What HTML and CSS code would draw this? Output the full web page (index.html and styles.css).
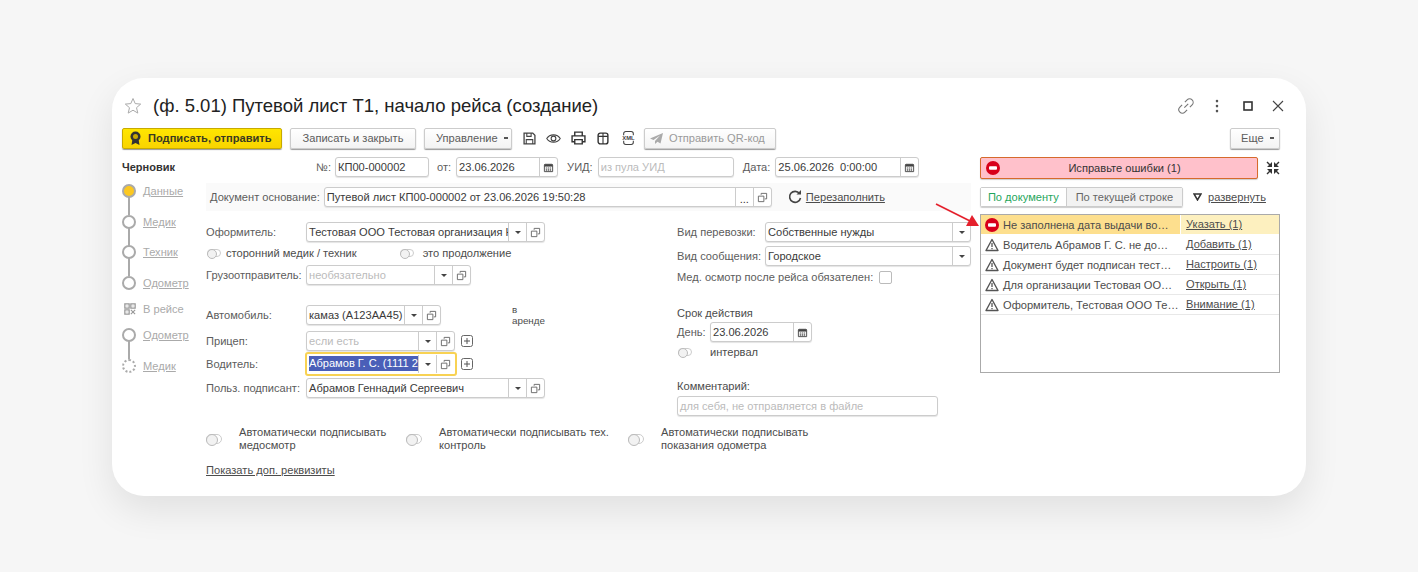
FILE: index.html
```html
<!DOCTYPE html>
<html lang="ru">
<head>
    <meta charset="UTF-8">
    <title>Путевой лист Т1</title>
    <link rel="stylesheet" href="styles.css">
</head>
<body>
    <svg class="defs" width="0" height="0">
        <symbol id="ico-copy" viewBox="0 0 12 12"><path d="M4.5 3V1.500h6v6H8.500M1.500 4.500h6v6h-6z" fill="none" stroke="#666"/></symbol>
        <symbol id="ico-cal" viewBox="0 0 12 12"><path d="M1.500 3.500a1 1 0 0 1 1-1h7a1 1 0 0 1 1 1v7h-9z" fill="#fff" stroke="#444"/><path d="M1.500 2.500h9v2.500h-9z" fill="#444"/><path d="M3 6.500h6M3 8h6M3 9.500h6" stroke="#555" stroke-dasharray="1.500 .7"/></symbol>
        <symbol id="ico-err" viewBox="0 0 14 14"><circle cx="7" cy="7" r="7" fill="#d8001a"/><rect x="3" y="5.300" width="8" height="3.400" rx="1" fill="#fff"/></symbol>
        <symbol id="ico-warn" viewBox="0 0 14 14"><path d="M7 1.500L13 12.500H1z" fill="none" stroke="#555" stroke-width="1.400" stroke-linejoin="round"/><path d="M7 5v4M7 10v1.300" stroke="#555" stroke-width="1.300"/></symbol>
        <symbol id="ico-plus" viewBox="0 0 12 12"><rect x=".5" y=".5" width="11" height="11" rx="2" fill="none" stroke="#666"/><path d="M6 3v6M3 6h6" stroke="#555"/></symbol>
    </svg>

    <div class="card">
        <div class="title-row">
            <svg class="star" width="18" height="18" viewBox="0 0 18 18"><path d="M9 1.500l2.200 5.100 5.500.5-4.200 3.600 1.300 5.400L9 13.200l-4.800 2.900 1.300-5.400L1.300 7.100l5.500-.5z" fill="none" stroke="#aaa"/></svg>
            <h1>(ф. 5.01) Путевой лист Т1, начало рейса (создание)</h1>
            <div class="win-tools">
                <svg width="20" height="20" viewBox="0 0 18 18"><path d="M7.500 10.500l3.500-3.500M8 5.500l2-2a3 3 0 0 1 4.500 4.500l-2 2M10 12.500l-2 2A3 3 0 0 1 3.500 10l2-2" fill="none" stroke="#777" stroke-width="1"/></svg>
                <svg width="4" height="14" viewBox="0 0 4 14"><path d="M2 2v.1M2 7v.1M2 12v.1" stroke="#555" stroke-width="2.600" stroke-linecap="round"/></svg>
                <svg width="10" height="10" viewBox="0 0 10 10"><rect x="1" y="1" width="8" height="8" fill="none" stroke="#333" stroke-width="1.600"/></svg>
                <svg width="12" height="12" viewBox="0 0 12 12"><path d="M1 1l10 10M11 1L1 11" stroke="#444" stroke-width="1.100"/></svg>
            </div>
        </div>

        <div class="toolbar">
            <button class="btn btn-sign">
                <svg width="13" height="15" viewBox="0 0 12 15"><path d="M3 8l-1 6 4-2 4 2-1-6" fill="#333"/><circle cx="6" cy="5.500" r="5" fill="#333"/><circle cx="6" cy="5.500" r="2.500" fill="#c9a800"/></svg>
                Подписать, отправить
            </button>
            <button class="btn btn-save">Записать и закрыть</button>
            <button class="btn btn-manage">Управление <i class="caret-sm"></i></button>
            <div class="tool-icons">
                <svg width="13" height="13" viewBox="0 0 12 12"><path d="M1 1h8l2 2v8H1z" fill="none" stroke="#444" stroke-width="1.200"/><path d="M3.500 1v3h4V1M3 11V7h6v4" fill="none" stroke="#444"/></svg>
                <svg width="15" height="11" viewBox="0 0 14 10"><path d="M.7 5C3.500.5 10.500.5 13.300 5 10.500 9.500 3.500 9.500.7 5z" fill="none" stroke="#444"/><circle cx="7" cy="5" r="2.200" fill="none" stroke="#444"/></svg>
                <svg width="15" height="14" viewBox="0 0 14 13"><path d="M3.500 4V1h7v3M3.500 10H1V4.500h12V10h-2.500" fill="none" stroke="#333" stroke-width="1.300"/><path d="M3.500 8h7v4h-7z" fill="none" stroke="#333" stroke-width="1.300"/></svg>
                <svg width="12" height="13" viewBox="0 0 11 12"><rect x="1" y="1" width="9" height="10" rx="2" fill="none" stroke="#333" stroke-width="1.300"/><path d="M1 4h9M5.500 1v10" stroke="#333"/></svg>
                <svg class="ico-xml" width="15" height="14" viewBox="0 0 14 13"><path d="M2.500 4V2.500a2 2 0 0 1 2-2h5a2 2 0 0 1 2 2V4M2.500 9v1.500a2 2 0 0 0 2 2h5a2 2 0 0 0 2-2V9" fill="none" stroke="#444"/><text x="7" y="8.600" text-anchor="middle">XML</text></svg>
            </div>
            <button class="btn btn-qr">
                <svg width="13" height="11" viewBox="0 0 13 11"><path d="M13 0L0 5.500l3.500 1.500L10 2.500 5 8v3l2.500-2.200L10.500 10.500z" fill="#aaa"/></svg>
                Отправить QR-код
            </button>
            <button class="btn btn-more">Еще <i class="caret-sm"></i></button>
        </div>

        <div class="main">
            <div class="steps">
                <div class="steps-title">Черновик</div>
                <a class="step step-first step-line"><i class="dot dot-on"></i>Данные</a>
                <a class="step step-line"><i class="dot"></i>Медик</a>
                <a class="step step-line step-tight"><i class="dot"></i>Техник</a>
                <a class="step"><i class="dot"></i>Одометр</a>
                <a class="step step-plain step-near">
                    <svg width="12" height="12" viewBox="0 0 14 14"><path d="M1 1h5v5H1zM8 1h5v5H8zM1 8h5v5H1z" fill="none" stroke="#999" stroke-width="1.500"/><path d="M3 3h1v1H3zM10 3h1v1h-1zM3 10h1v1H3z" fill="#999"/><path d="M8 8l5 5M13 8l-5 5" stroke="#999" stroke-width="1.300"/></svg>
                    В рейсе
                </a>
                <a class="step step-near step-line"><i class="dot"></i>Одометр</a>
                <a class="step"><i class="dot dot-dash"></i>Медик</a>
            </div>

            <div class="form">
                <div class="doc-row">
                    <label class="lbl">№:</label>
                    <div class="field w-num"><span class="val">КП00-000002</span></div>
                    <label class="lbl">от:</label>
                    <div class="field w-date"><span class="val">23.06.2026</span><span class="fbtn"><svg><use href="#ico-cal"/></svg></span></div>
                    <label class="lbl">УИД:</label>
                    <div class="field w-uid"><span class="val hint">из пула УИД</span></div>
                    <label class="lbl">Дата:</label>
                    <div class="field w-datetime"><span class="val">25.06.2026&nbsp; 0:00:00</span><span class="fbtn"><svg><use href="#ico-cal"/></svg></span></div>
                </div>

                <div class="base-row">
                    <label class="lbl">Документ основание:</label>
                    <div class="field w-base">
                        <span class="val">Путевой лист КП00-000002 от 23.06.2026 19:50:28</span>
                        <span class="fbtn dots">...</span>
                        <span class="fbtn"><svg><use href="#ico-copy"/></svg></span>
                    </div>
                    <svg class="ico-refresh" width="14" height="14" viewBox="0 0 14 14"><path d="M11.500 3.500A5.500 5.500 0 1 0 12.500 8" fill="none" stroke="#444" stroke-width="1.600"/><path d="M8.500 4.500h4.500V0z" fill="#444"/></svg>
                    <a class="link">Перезаполнить</a>
                </div>

                <div class="cols">
                    <div class="col-left">
                        <div class="row">
                            <label class="lbl lbl-w">Оформитель:</label>
                            <div class="field w-wide">
                                <span class="val">Тестовая ООО Тестовая организация КПП</span>
                                <span class="fbtn"><i class="caret"></i></span>
                                <span class="fbtn"><svg><use href="#ico-copy"/></svg></span>
                            </div>
                        </div>
                        <div class="row-toggles">
                            <i class="toggle"></i><span class="toggle-text">сторонний медик / техник</span>
                            <i class="toggle toggle-second"></i><span class="toggle-text">это продолжение</span>
                        </div>
                        <div class="row row-shipper">
                            <label class="lbl lbl-w">Грузоотправитель:</label>
                            <div class="field w-shipper">
                                <span class="val hint">необязательно</span>
                                <span class="fbtn"><i class="caret"></i></span>
                                <span class="fbtn"><svg><use href="#ico-copy"/></svg></span>
                            </div>
                        </div>
                        <div class="row row-car">
                            <label class="lbl lbl-w">Автомобиль:</label>
                            <div class="field w-car">
                                <span class="val">камаз (А123АА45)</span>
                                <span class="fbtn"><i class="caret"></i></span>
                                <span class="fbtn"><svg><use href="#ico-copy"/></svg></span>
                            </div>
                            <span class="rent">в<br>аренде</span>
                        </div>
                        <div class="row row-trailer">
                            <label class="lbl lbl-w">Прицеп:</label>
                            <div class="field w-driver">
                                <span class="val hint">если есть</span>
                                <span class="fbtn"><i class="caret"></i></span>
                                <span class="fbtn"><svg><use href="#ico-copy"/></svg></span>
                            </div>
                            <svg class="ico-plus" width="12" height="12"><use href="#ico-plus"/></svg>
                        </div>
                        <div class="row row-driver">
                            <label class="lbl lbl-w">Водитель:</label>
                            <div class="field w-driver field-active">
                                <span class="val"><span class="selected">Абрамов Г. С. (1111 222222)</span></span>
                                <span class="fbtn"><i class="caret"></i></span>
                                <span class="fbtn"><svg><use href="#ico-copy"/></svg></span>
                            </div>
                            <svg class="ico-plus" width="12" height="12"><use href="#ico-plus"/></svg>
                        </div>
                        <div class="row row-signer">
                            <label class="lbl lbl-w">Польз. подписант:</label>
                            <div class="field w-wide">
                                <span class="val">Абрамов Геннадий Сергеевич</span>
                                <span class="fbtn"><i class="caret"></i></span>
                                <span class="fbtn"><svg><use href="#ico-copy"/></svg></span>
                            </div>
                        </div>
                    </div>

                    <div class="col-right">
                        <div class="row">
                            <label class="lbl lbl-r">Вид перевозки:</label>
                            <div class="field w-kind"><span class="val">Собственные нужды</span><span class="fbtn"><i class="caret"></i></span></div>
                        </div>
                        <div class="row row-kind2">
                            <label class="lbl lbl-r">Вид сообщения:</label>
                            <div class="field w-kind"><span class="val">Городское</span><span class="fbtn"><i class="caret"></i></span></div>
                        </div>
                        <div class="row-check">
                            <label class="lbl">Мед. осмотр после рейса обязателен:</label>
                            <i class="checkbox"></i>
                        </div>
                        <div class="term-title">Срок действия</div>
                        <div class="row row-day">
                            <label class="lbl lbl-day">День:</label>
                            <div class="field w-day"><span class="val">23.06.2026</span><span class="fbtn"><svg><use href="#ico-cal"/></svg></span></div>
                        </div>
                        <div class="row-interval">
                            <i class="toggle"></i><span class="toggle-text">интервал</span>
                        </div>
                        <div class="comment-title">Комментарий:</div>
                        <div class="field w-comment"><span class="val hint">для себя, не отправляется в файле</span></div>
                    </div>
                </div>

                <div class="autos">
                    <div class="auto auto-1"><i class="toggle"></i><span>Автоматически подписывать медосмотр</span></div>
                    <div class="auto auto-2"><i class="toggle"></i><span>Автоматически подписывать тех. контроль</span></div>
                    <div class="auto auto-3"><i class="toggle"></i><span>Автоматически подписывать показания одометра</span></div>
                </div>
                <a class="link link-more">Показать доп. реквизиты</a>
            </div>

            <div class="side">
                <div class="side-top">
                    <div class="err-bar">
                        <svg width="14" height="14"><use href="#ico-err"/></svg>
                        <span>Исправьте ошибки (1)</span>
                    </div>
                    <svg class="ico-collapse" width="14" height="14" viewBox="0 0 14 14"><path d="M1 1l4 4M13 1L9 5M1 13l4-4M13 13L9 9" stroke="#333" stroke-width="1.400"/><path d="M1 6h5V1zM13 6H8V1zM1 8h5v5zM13 8H8v5z" fill="#333"/></svg>
                </div>
                <div class="side-tabs">
                    <div class="tabs">
                        <span class="tab tab-on">По документу</span>
                        <span class="tab">По текущей строке</span>
                    </div>
                    <svg class="ico-tri" width="9" height="8" viewBox="0 0 9 8"><path d="M1 1h7L4.500 7z" fill="none" stroke="#333" stroke-width="1.500"/></svg>
                    <a class="link">развернуть</a>
                </div>
                <div class="issues">
                    <div class="issue issue-on">
                        <svg width="14" height="14"><use href="#ico-err"/></svg>
                        <span class="issue-text">Не заполнена дата выдачи во…</span>
                        <a class="issue-link"><span class="link">Указать (1)</span></a>
                    </div>
                    <div class="issue">
                        <svg width="14" height="14"><use href="#ico-warn"/></svg>
                        <span class="issue-text">Водитель Абрамов Г. С. не до…</span>
                        <a class="issue-link"><span class="link">Добавить (1)</span></a>
                    </div>
                    <div class="issue">
                        <svg width="14" height="14"><use href="#ico-warn"/></svg>
                        <span class="issue-text">Документ будет подписан тест…</span>
                        <a class="issue-link"><span class="link">Настроить (1)</span></a>
                    </div>
                    <div class="issue">
                        <svg width="14" height="14"><use href="#ico-warn"/></svg>
                        <span class="issue-text">Для организации Тестовая ОО…</span>
                        <a class="issue-link"><span class="link">Открыть (1)</span></a>
                    </div>
                    <div class="issue">
                        <svg width="14" height="14"><use href="#ico-warn"/></svg>
                        <span class="issue-text">Оформитель, Тестовая ООО Те…</span>
                        <a class="issue-link"><span class="link">Внимание (1)</span></a>
                    </div>
                </div>
            </div>
        </div>

        <svg class="arrow" width="48" height="26" viewBox="0 0 48 26"><path d="M1 1l34 17" stroke="#e4202c" stroke-width="1.600"/><path d="M44 23l-13 0 6-11z" fill="#e4202c"/></svg>
    </div>
</body>
</html>
```

FILE: styles.css
```css
* {
    box-sizing: border-box;
}

body {
    margin: 0;
    height: 572px;
    overflow: hidden;
    background: #f6f6f6;
    font-family: "Liberation Sans", Arial, sans-serif;
    font-size: 11.1px;
    color: #4c4c4c;
}

.defs {
    display: block;
    height: 0;
}

.card {
    position: relative;
    width: 1194px;
    height: 418px;
    margin: 78px 0 0 112px;
    padding: 16px 26px 0 10px;
    background: #fff;
    border-radius: 32px;
    box-shadow: 0 14px 36px rgba(0, 0, 0, 0.09);
}

/* title */
.title-row {
    display: flex;
    align-items: center;
    height: 24px;
}

.star {
    margin: 0 0 0 2px;
}

.title-row h1 {
    margin: 0 0 0 11px;
    font-size: 18.5px;
    font-weight: normal;
    color: #222;
}

.win-tools {
    display: flex;
    align-items: center;
    margin: 0 -4px 0 auto;
}

.win-tools svg:nth-child(1) { margin-right: 19px; }
.win-tools svg:nth-child(2) { margin-right: 24px; }
.win-tools svg:nth-child(3) { margin-right: 19px; }

/* toolbar */
.toolbar {
    display: flex;
    align-items: center;
    height: 22px;
    margin-top: 9px;
}

.btn {
    display: flex;
    align-items: center;
    justify-content: center;
    height: 21px;
    padding: 0;
    background: linear-gradient(#fff, #f3f3f3);
    border: 1px solid #ccc;
    border-radius: 2px;
    box-shadow: 0 1px 1px #999;
    font-family: inherit;
    font-size: 11.1px;
    color: #5c5c5c;
}

.btn-sign {
    justify-content: flex-start;
    width: 160px;
    gap: 6px;
    padding-left: 6px;
    background: linear-gradient(#ffe600, #f9d400);
    border-color: #c7aa00;
    font-weight: bold;
    color: #3a3a20;
}

.btn-save {
    width: 126px;
    margin-left: 8px;
}

.btn-manage {
    justify-content: flex-start;
    width: 88px;
    margin-left: 8px;
    padding-left: 11px;
    gap: 6px;
}

.caret-sm {
    width: 4px;
    height: 2px;
    background: #555;
}

.tool-icons {
    display: flex;
    align-items: center;
    width: 132px;
    padding-left: 11px;
}

.tool-icons svg:nth-child(1) { margin-right: 10px; }
.tool-icons svg:nth-child(2) { margin-right: 10px; }
.tool-icons svg:nth-child(3) { margin-right: 11px; }
.tool-icons svg:nth-child(4) { margin-right: 12px; }

.ico-xml text {
    font-family: "Liberation Sans", Arial, sans-serif;
    font-size: 5.500px;
    font-weight: bold;
    fill: #444;
}

.btn-qr {
    justify-content: flex-start;
    width: 132px;
    padding-left: 5px;
    gap: 6px;
    color: #9a9a9a;
}

.btn-more {
    justify-content: flex-start;
    width: 50px;
    margin-left: auto;
    padding-left: 10px;
    gap: 6px;
}

/* main */
.main {
    display: flex;
    margin-top: 8px;
}

.steps {
    width: 84px;
}

.steps-title {
    height: 20px;
    line-height: 20px;
    font-size: 11px;
    font-weight: bold;
    color: #333;
}

.step {
    position: relative;
    display: flex;
    align-items: center;
    gap: 7px;
    height: 14px;
    margin-top: 17px;
    color: #aaa;
    text-decoration: underline;
}

.step-first {
    margin-top: 7px;
}

.step-tight {
    margin-top: 16px;
}

.step-near {
    margin-top: 12px;
}

.step-plain {
    padding-left: 2px;
    text-decoration: none;
}

.step-line::after {
    content: "";
    position: absolute;
    left: 6px;
    top: 13px;
    width: 2px;
    height: 18px;
    background: #aaa;
}

.dot {
    position: relative;
    z-index: 1;
    flex: none;
    width: 14px;
    height: 14px;
    border: 2px solid #aaa;
    border-radius: 50%;
    background: #fff;
}

.dot-on {
    background: #fcc820;
}

.dot-dash {
    border-style: dotted;
}

.form {
    width: 765px;
}

.lbl {
    color: #5c5c5c;
    white-space: nowrap;
}

.field {
    display: flex;
    align-items: stretch;
    flex: none;
    height: 20px;
    border: 1px solid #ccc;
    border-radius: 3px;
    background: #fff;
    box-shadow: 0 1px 1px #e4e4e4;
}

.val {
    flex: 1;
    min-width: 0;
    padding-left: 2px;
    overflow: hidden;
    line-height: 18px;
    white-space: nowrap;
    color: #3a3a3a;
}

.hint {
    color: #bbb;
}

.fbtn {
    display: flex;
    align-items: center;
    justify-content: center;
    flex: none;
    width: 18px;
    border-left: 1px solid #ccc;
}

.fbtn svg {
    width: 11px;
    height: 11px;
}

.dots {
    padding-top: 4px;
    color: #333;
}

.caret {
    width: 0;
    height: 0;
    border: 3px solid transparent;
    border-top: 3px solid #444;
    border-bottom: 0;
}

.doc-row {
    display: flex;
    align-items: center;
    height: 20px;
    padding-left: 110px;
}

.w-num { width: 94px; margin-left: 4px; }
.w-date { width: 102px; margin-left: 5px; }
.w-uid { width: 136px; margin-left: 5px; }
.w-datetime { width: 144px; margin-left: 5px; }
.doc-row .lbl:nth-of-type(2) { margin-left: 8px; }
.doc-row .lbl:nth-of-type(3) { margin-left: 9px; }
.doc-row .lbl:nth-of-type(4) { margin-left: 9px; }

.base-row {
    display: flex;
    align-items: center;
    height: 28px;
    margin-top: 6px;
    padding-left: 4px;
    background: #fafafa;
}

.w-base {
    width: 448px;
    margin-left: 4px;
}

.ico-refresh {
    margin: 0 4px 0 16px;
}

.link {
    color: #4c4c4c;
    text-decoration: underline;
    white-space: nowrap;
}

.cols {
    display: flex;
    margin-top: 11px;
}

.col-left {
    width: 471px;
}

.col-right {
    width: 294px;
}

.row {
    display: flex;
    align-items: center;
    height: 20px;
}

.lbl-w { width: 100px; }
.lbl-r { width: 88px; }

.w-wide { width: 239px; }
.w-shipper { width: 165px; }
.w-car { width: 135px; }
.w-driver { width: 149px; }
.w-kind { width: 206px; }
.w-day { width: 102px; }
.w-comment { width: 261px; }

.row-toggles {
    display: flex;
    align-items: center;
    height: 14px;
    margin-top: 4px;
}

.toggle {
    flex: none;
    position: relative;
    display: block;
    width: 14px;
    height: 8px;
    margin-left: 1px;
    border: 1px solid #ccc;
    border-radius: 5px;
    background: #fff;
}

.toggle::before {
    content: "";
    position: absolute;
    left: -1px;
    top: -1px;
    width: 8px;
    height: 8px;
    border: 1px solid #bbb;
    border-radius: 50%;
    background: #f2f2f2;
}

.toggle-text {
    margin-left: 5px;
    color: #4c4c4c;
}

.toggle-second {
    margin-left: 43px;
}

.toggle-second + .toggle-text {
    margin-left: 9px;
}

.row-shipper { margin-top: 5px; }
.row-car { margin-top: 20px; }
.row-trailer { margin-top: 6px; }
.row-driver { margin-top: 3px; }
.row-signer { margin-top: 4px; }

.rent {
    margin-left: 71px;
    font-size: 9.800px;
    line-height: 11px;
    color: #4c4c4c;
}

.ico-plus {
    margin-left: 6px;
}

.field-active {
    width: 148px;
    margin-left: 1px;
    border-color: transparent;
    border-radius: 1px;
    outline: 2px solid #f8d253;
    box-shadow: none;
}

.field-active .val {
    padding-left: 1px;
}

.selected {
    display: inline-block;
    margin-top: 1px;
    line-height: 15px;
    background: #4a5fb8;
    color: #fff;
    vertical-align: top;
}

.row-kind2 { margin-top: 4px; }

.row-check {
    display: flex;
    align-items: center;
    height: 14px;
    margin-top: 4px;
}

.checkbox {
    width: 13px;
    height: 13px;
    margin-left: 6px;
    border: 1px solid #bbb;
    border-radius: 2px;
}

.term-title {
    margin-top: 22px;
    line-height: 14px;
}

.row-day {
    margin-top: 2px;
}

.lbl-day { width: 33px; }

.row-interval {
    display: flex;
    align-items: center;
    height: 14px;
    margin-top: 3px;
}

.row-interval .toggle-text {
    margin-left: 18px;
}

.comment-title {
    margin-top: 20px;
    line-height: 14px;
}

.w-comment {
    margin-top: 3px;
}

.autos {
    display: grid;
    grid-template-columns: 200px 222px 300px;
    margin-top: 10px;
}

.auto {
    display: flex;
    align-items: center;
    line-height: 13px;
}

.auto .toggle {
    width: 16px;
    height: 10px;
    margin: 0 17px 0 0;
}

.auto .toggle::before {
    width: 10px;
    height: 10px;
}

.auto-1 span { width: 155px; }
.auto-2 span { width: 176px; }
.auto-3 span { width: 160px; }

.link-more {
    display: block;
    margin-top: 12px;
}

/* errors */
.side {
    width: 300px;
    margin-left: 9px;
}

.side-top {
    display: flex;
    align-items: center;
    justify-content: space-between;
}

.err-bar {
    display: flex;
    align-items: center;
    width: 278px;
    height: 22px;
    padding-left: 5px;
    background: #ffc1cb;
    border: 1px solid #d66a2c;
    border-radius: 2px;
    box-shadow: 0 1px 1px #ccc;
    color: #333;
}

.err-bar span {
    flex: 1;
    padding-right: 8px;
    text-align: center;
}

.side-tabs {
    display: flex;
    align-items: center;
    margin-top: 8px;
}

.tabs {
    display: flex;
    width: 203px;
    height: 20px;
    border: 1px solid #ccc;
    border-radius: 2px;
    box-shadow: 0 1px 1px #ccc;
}

.tab {
    line-height: 18px;
    text-align: center;
    flex: 117;
    background: #f2f2f2;
    color: #666;
    border-left: 1px solid #ccc;
}

.tab-on {
    flex: 86;
    background: #fff;
    border-left: 0;
    color: #1fa65c;
}

.ico-tri {
    margin: 0 6px 0 10px;
}

.issues {
    height: 159px;
    margin-top: 7px;
    border: 1px solid #aaa;
}

.issue {
    display: flex;
    align-items: center;
    height: 20px;
    padding-left: 4px;
    border-bottom: 1px solid #e8e8e8;
}

.issue svg {
    flex: none;
}

.issue-text {
    margin-left: 4px;
    white-space: nowrap;
    color: #4c4c4c;
}

.issue-link {
    margin-left: auto;
    width: 99px;
    height: 100%;
    padding-left: 6px;
    line-height: 19px;
}

.issue-on {
    background: #fddf8e;
    border-bottom-color: #fff;
}

.issue-on .issue-link {
    padding-left: 5px;
    background: #fdf0bf;
    border-left: 1px solid #fff;
}

.arrow {
    position: absolute;
    left: 823px;
    top: 125px;
}
```
